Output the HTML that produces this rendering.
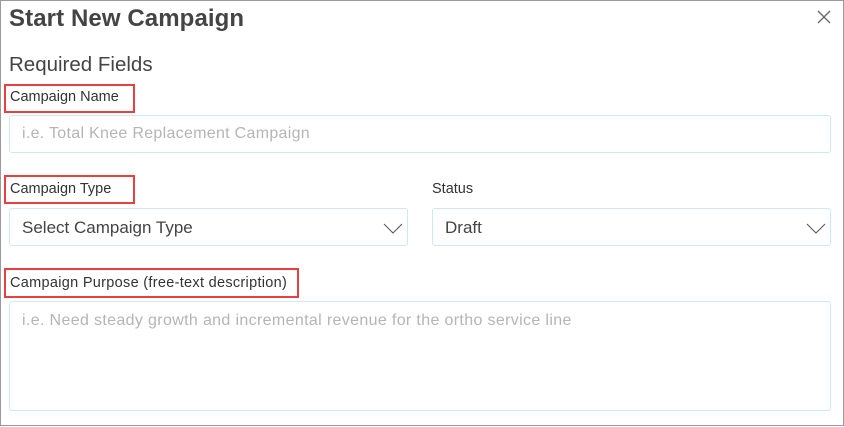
<!DOCTYPE html><html><head><style>
body{margin:0;width:844px;height:427px;background:#fff;font-family:"Liberation Sans",sans-serif;position:relative;overflow:hidden;color:#444}
.frame{position:absolute;left:0;top:0;width:842px;height:424px;border:1px solid #9a9a9a}
.a{position:absolute;white-space:nowrap}
.red{position:absolute;border:2px solid #e84040;box-sizing:border-box}
.in{position:absolute;border:1px solid #cdeaf2;border-radius:3px;box-sizing:border-box;background:#fff}
.ph{color:#b5b5b5;font-size:16px;letter-spacing:0.3px}
.lbl{font-size:14.5px;color:#333;letter-spacing:0px}
</style></head><body>
<div class="frame"></div>
<div class="a" style="left:9px;top:5px;font-size:24px;font-weight:bold;color:#444;letter-spacing:0.1px">Start New Campaign</div>
<svg class="a" style="left:817px;top:10px" width="14" height="14"><path d="M1 1L13 13M13 1L1 13" stroke="#666" stroke-width="1.3"/></svg>
<div class="a" style="left:9px;top:53px;font-size:20.5px;color:#444">Required Fields</div>
<div class="red" style="left:4px;top:84px;width:131px;height:29px"></div>
<div class="a lbl" style="left:10px;top:89px">Campaign Name</div>
<div class="in" style="left:9px;top:115px;width:822px;height:38px"></div>
<div class="a ph" style="left:22px;top:125px">i.e. Total Knee Replacement Campaign</div>
<div class="red" style="left:4px;top:175px;width:131px;height:29px"></div>
<div class="a lbl" style="left:10px;top:181px">Campaign Type</div>
<div class="a lbl" style="left:432px;top:181px">Status</div>
<div class="in" style="left:9px;top:208px;width:399px;height:38px"></div>
<div class="a" style="left:22px;top:218px;font-size:17px;color:#444">Select Campaign Type</div>
<svg class="a" style="left:383px;top:221px" width="20" height="14"><path d="M1 3L10 12L19 3" stroke="#555" fill="none" stroke-width="1"/></svg>
<div class="in" style="left:432px;top:208px;width:399px;height:38px"></div>
<div class="a" style="left:445px;top:218px;font-size:17px;color:#444">Draft</div>
<svg class="a" style="left:806px;top:221px" width="20" height="14"><path d="M1 3L10 12L19 3" stroke="#555" fill="none" stroke-width="1"/></svg>
<div class="red" style="left:4px;top:268px;width:295px;height:30px"></div>
<div class="a lbl" style="left:10px;top:275px;letter-spacing:0.3px">Campaign Purpose (free-text description)</div>
<div class="in" style="left:9px;top:301px;width:822px;height:110px"></div>
<div class="a ph" style="left:22px;top:312px;letter-spacing:0.35px">i.e. Need steady growth and incremental revenue for the ortho service line</div>
</body></html>
